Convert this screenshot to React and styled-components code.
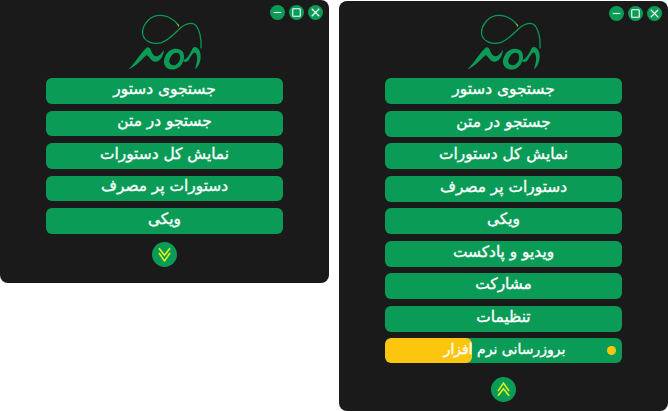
import React from "react";
import styled, { createGlobalStyle } from "styled-components";

const green = "#0a9c57";

const GlobalStyle = createGlobalStyle`
  html, body {
    margin: 0;
    padding: 0;
    background: #fff;
    overflow: hidden;
  }
`;

const Logo = () => (
  <LogoSvg viewBox="0 0 270 195">
    <path
      fill="none"
      stroke={green}
      strokeWidth="3.8"
      d="M175 45 C160 25 135 12 110 17 C85 22 65 50 68 72 C72 95 100 105 125 98 C145 90 160 75 175 60 C190 45 205 35 222 42 C238 52 245 85 243 115"
    />
    <path
      fill={green}
      d="M25 178 C45 160 60 130 80 113 C88 108 92 118 97 130 C102 140 112 143 122 132 L132 120 C130 140 118 158 104 155 C92 152 88 140 80 135 C65 148 48 170 25 178 Z"
    />
    <path
      fill={green}
      fillRule="evenodd"
      d="M135 140 C145 115 175 110 188 125 C198 140 190 170 165 178 C140 182 125 165 135 140 Z M150 145 C143 160 155 170 168 164 C180 158 185 140 176 130 C165 124 155 132 150 145 Z"
    />
    <path
      fill={green}
      d="M188 150 C200 150 208 135 218 115 C225 105 240 115 242 135 C243 155 235 170 225 178 C230 160 235 145 228 130 C222 122 215 135 208 148 C202 158 192 158 188 150 Z"
    />
    <path fill="#e0a020" d="M170 40 L178 46 L176 52 Z" />
  </LogoSvg>
);

const Chevrons = ({ up }) => (
  <ChevronSvg viewBox="0 0 24 24" $up={up}>
    <path d="M5 4 L12 13 L19 4" />
    <path d="M5 10 L12 20 L19 10" />
  </ChevronSvg>
);

const WindowControls = () => (
  <Controls>
    <Control>
      <svg viewBox="0 0 16 16"><path d="M4 8 H12" /></svg>
    </Control>
    <Control>
      <svg viewBox="0 0 16 16"><rect x="4" y="4" width="8" height="8" rx="0.5" /></svg>
    </Control>
    <Control>
      <svg viewBox="0 0 16 16"><path d="M4 4 L12 12 M12 4 L4 12" /></svg>
    </Control>
  </Controls>
);

const baseItems = [
  "جستجوی دستور",
  "جستجو در متن",
  "نمایش کل دستورات",
  "دستورات پر مصرف",
  "ویکی",
];

const moreItems = ["ویدیو و پادکست", "مشارکت", "تنظیمات"];

const App = () => (
  <>
    <GlobalStyle />
    <Page>
      <Panel $short>
        <WindowControls />
        <Logo />
        <Menu>
          {baseItems.map((item) => (
            <MenuButton key={item}>{item}</MenuButton>
          ))}
        </Menu>
        <Toggle>
          <Chevrons />
        </Toggle>
      </Panel>
      <Panel>
        <WindowControls />
        <Logo />
        <Menu $tall>
          {[...baseItems, ...moreItems].map((item) => (
            <MenuButton key={item} $tall>{item}</MenuButton>
          ))}
          <UpdateButton>
            <Progress />
            <UpdateLabel>بروزرسانی نرم افزار</UpdateLabel>
            <Dot />
          </UpdateButton>
        </Menu>
        <Toggle $tall>
          <Chevrons up />
        </Toggle>
      </Panel>
    </Page>
  </>
);
export default App;

const Page = styled.div`
  width: 668px;
  height: 411px;
  display: flex;
  align-items: flex-start;
  gap: 10px;
  font-family: "DejaVu Sans", sans-serif;
`;

const Panel = styled.div`
  position: relative;
  width: 329px;
  height: ${(p) => (p.$short ? "283px" : "410px")};
  margin-top: ${(p) => (p.$short ? "0" : "1px")};
  padding-top: ${(p) => (p.$short ? "10px" : "9px")};
  box-sizing: border-box;
  background: #1a1a1a;
  border-radius: ${(p) => (p.$short ? "0 8px 8px 8px" : "8px")};
  display: flex;
  flex-direction: column;
  align-items: center;
`;

const Controls = styled.div`
  position: absolute;
  top: 5px;
  right: 6px;
  display: flex;
  gap: 4px;
`;

const Control = styled.div`
  width: 15px;
  height: 15px;
  border-radius: 50%;
  background: ${green};
  display: flex;
  align-items: center;
  justify-content: center;

  svg {
    width: 15px;
    height: 15px;
    fill: none;
    stroke: #fff;
    stroke-width: 1.2;
  }
`;

const LogoSvg = styled.svg`
  width: 90px;
  height: 65px;
  margin-bottom: 3px;
  flex-shrink: 0;
`;

const Menu = styled.div`
  display: flex;
  flex-direction: column;
  gap: ${(p) => (p.$tall ? "6.5px" : "7px")};
`;

const MenuButton = styled.div`
  width: 237px;
  height: ${(p) => (p.$tall ? "26px" : "25.5px")};
  padding-bottom: 4px;
  box-sizing: border-box;
  border-radius: 6px;
  background: ${green};
  color: #fff;
  font-size: 15.4px;
  -webkit-text-stroke: 0.35px #fff;
  display: flex;
  align-items: center;
  justify-content: center;
  direction: rtl;
`;

const UpdateButton = styled(MenuButton)`
  position: relative;
  height: 25px;
  direction: ltr;
  overflow: hidden;
  font-size: 14px;
`;

const Progress = styled.div`
  position: absolute;
  left: 0;
  top: 0;
  bottom: 0;
  width: 87px;
  background: #fcc60e;
  border-radius: 6px;
`;

const UpdateLabel = styled.span`
  position: relative;
  left: 1px;
  direction: rtl;
`;

const Dot = styled.span`
  position: absolute;
  right: 6px;
  top: 8px;
  width: 9px;
  height: 9px;
  border-radius: 50%;
  background: #fcc60e;
`;

const Toggle = styled.div`
  width: 25px;
  height: 25px;
  margin-top: ${(p) => (p.$tall ? "14px" : "8px")};
  border-radius: 50%;
  background: ${green};
  display: flex;
  align-items: center;
  justify-content: center;
`;

const ChevronSvg = styled.svg`
  width: 19px;
  height: 19px;
  fill: none;
  stroke: #e6f21a;
  stroke-width: 2;
  transform: ${(p) => (p.$up ? "rotate(180deg)" : "none")};
`;
